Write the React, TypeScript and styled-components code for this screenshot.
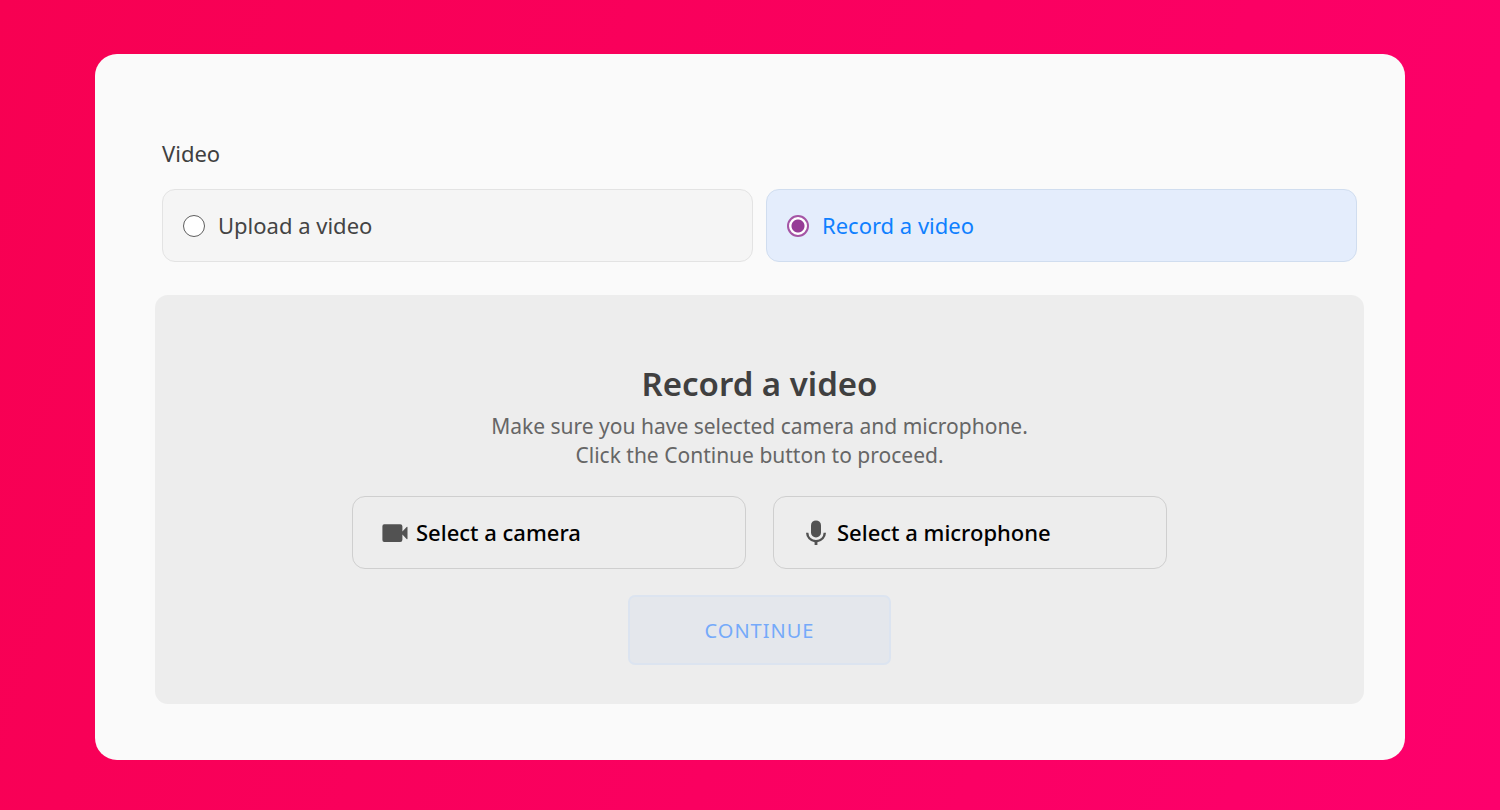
import React, { useState } from "react";
import styled, { createGlobalStyle } from "styled-components";

const GlobalStyle = createGlobalStyle`
  * {
    box-sizing: border-box;
  }

  body {
    margin: 0;
    font-family: "Noto Sans", "Open Sans", sans-serif;
    color: #404040;
  }
`;

const Page = styled.main`
  display: flex;
  min-height: 100vh;
  padding: 54px 95px 50px;
  background: linear-gradient(110deg, #f70052 0%, #fa0060 55%, #fd006c 100%);
`;

const Card = styled.form`
  flex: 1;
  min-width: 0;
  padding: 84px 41px 56px 60px;
  border-radius: 22px;
  background: #fafafa;
`;

const SourceField = styled.fieldset`
  min-width: 0;
  margin: 0;
  padding: 0 7px;
  border: 0;
`;

const Legend = styled.legend`
  padding: 0;
  font-size: 22px;
  line-height: 30px;
`;

const Options = styled.div`
  display: grid;
  grid-template-columns: 1fr 1fr;
  gap: 13px;
  margin-top: 21px;
`;

const Option = styled.label<{ $selected: boolean }>`
  display: flex;
  align-items: center;
  gap: 13px;
  height: 73px;
  padding: 0 20px;
  border: 1px solid ${(p) => (p.$selected ? "#d0ddef" : "#e3e3e3")};
  border-radius: 13px;
  background: ${(p) => (p.$selected ? "#e4edfc" : "#f5f5f5")};
  color: ${(p) => (p.$selected ? "#0f80ff" : "#444444")};
  cursor: pointer;
`;

const ControlText = styled.span<{ $medium?: boolean }>`
  padding-bottom: 2px;
  font-size: 22px;
  font-weight: ${(p) => (p.$medium ? 500 : 400)};
  line-height: 30px;
`;

const Radio = styled.input`
  appearance: none;
  flex: none;
  width: 22px;
  height: 22px;
  margin: 0;
  border: 1px solid #5e5e5e;
  border-radius: 50%;
  background: #ffffff;

  &:checked {
    border: 2px solid #a555a5;
    background: radial-gradient(circle, #963c96 6px, #ffffff 7px);
  }
`;

const Panel = styled.section`
  display: flex;
  flex-direction: column;
  align-items: center;
  margin-top: 33px;
  padding: 65px 24px 39px;
  border-radius: 13px;
  background: #ededed;
`;

const Title = styled.h2`
  margin: 0;
  font-size: 33px;
  font-weight: 600;
  line-height: 48px;
`;

const Hint = styled.p`
  margin: 4px 0 0;
  color: #666666;
  font-size: 21px;
  line-height: 29px;
  text-align: center;
`;

const Devices = styled.div`
  display: grid;
  grid-template-columns: 1fr 1fr;
  gap: 27px;
  width: 100%;
  max-width: 815px;
  margin-top: 26px;
`;

const DeviceButton = styled.button`
  display: flex;
  align-items: center;
  gap: 8px;
  height: 73px;
  padding: 0 29px;
  border: 1px solid #cfcfcf;
  border-radius: 13px;
  background: transparent;
  color: #000000;
  font-family: inherit;
  cursor: pointer;
`;

const DeviceIcon = styled.svg`
  flex: none;
  width: 26px;
  height: 26px;
  fill: #525252;
`;

const ContinueButton = styled.button`
  width: 263px;
  height: 70px;
  margin-top: 26px;
  border: 2px solid #dce4f0;
  border-radius: 7px;
  background: #e4e7ec;
  color: #75aafa;
  font-family: inherit;
  font-size: 20px;
  letter-spacing: 1px;
  text-transform: uppercase;
`;

function CameraIcon() {
  return (
    <DeviceIcon viewBox="0 0 26 26" aria-hidden="true">
      <path d="M2.2 4.2H18.2Q20.4 4.2 20.4 6.2V11.4L24.6 7Q25.5 6.2 25.5 7.4V18.6Q25.5 19.8 24.6 19L20.4 14.6V19.8Q20.4 22 18.2 22H2.2Q0.4 22 0.4 20V6.2Q0.4 4.2 2.2 4.2Z" />
    </DeviceIcon>
  );
}

function MicrophoneIcon() {
  return (
    <DeviceIcon viewBox="0 0 26 26" aria-hidden="true">
      <rect x="8" y="0.4" width="10" height="17" rx="5" />
      <path d="M3 12.8H5.4A7.6 7.2 0 0 0 20.6 12.8H23A10 9.7 0 0 1 14.4 22.3V25H11.6V22.3A10 9.7 0 0 1 3 12.8Z" />
    </DeviceIcon>
  );
}

const sources = [
  { id: "upload", label: "Upload a video" },
  { id: "record", label: "Record a video" },
];

export default function App() {
  const [source, setSource] = useState("record");

  return (
    <>
      <GlobalStyle />
      <Page>
        <Card>
          <SourceField>
            <Legend>Video</Legend>
            <Options>
              {sources.map(({ id, label }) => (
                <Option key={id} htmlFor={id} $selected={source === id}>
                  <Radio
                    type="radio"
                    id={id}
                    name="source"
                    checked={source === id}
                    onChange={() => setSource(id)}
                  />
                  <ControlText>{label}</ControlText>
                </Option>
              ))}
            </Options>
          </SourceField>
          <Panel>
            <Title>Record a video</Title>
            <Hint>
              Make sure you have selected camera and microphone.
              <br />
              Click the Continue button to proceed.
            </Hint>
            <Devices>
              <DeviceButton type="button">
                <CameraIcon />
                <ControlText $medium>Select a camera</ControlText>
              </DeviceButton>
              <DeviceButton type="button">
                <MicrophoneIcon />
                <ControlText $medium>Select a microphone</ControlText>
              </DeviceButton>
            </Devices>
            <ContinueButton type="submit" disabled>
              Continue
            </ContinueButton>
          </Panel>
        </Card>
      </Page>
    </>
  );
}
